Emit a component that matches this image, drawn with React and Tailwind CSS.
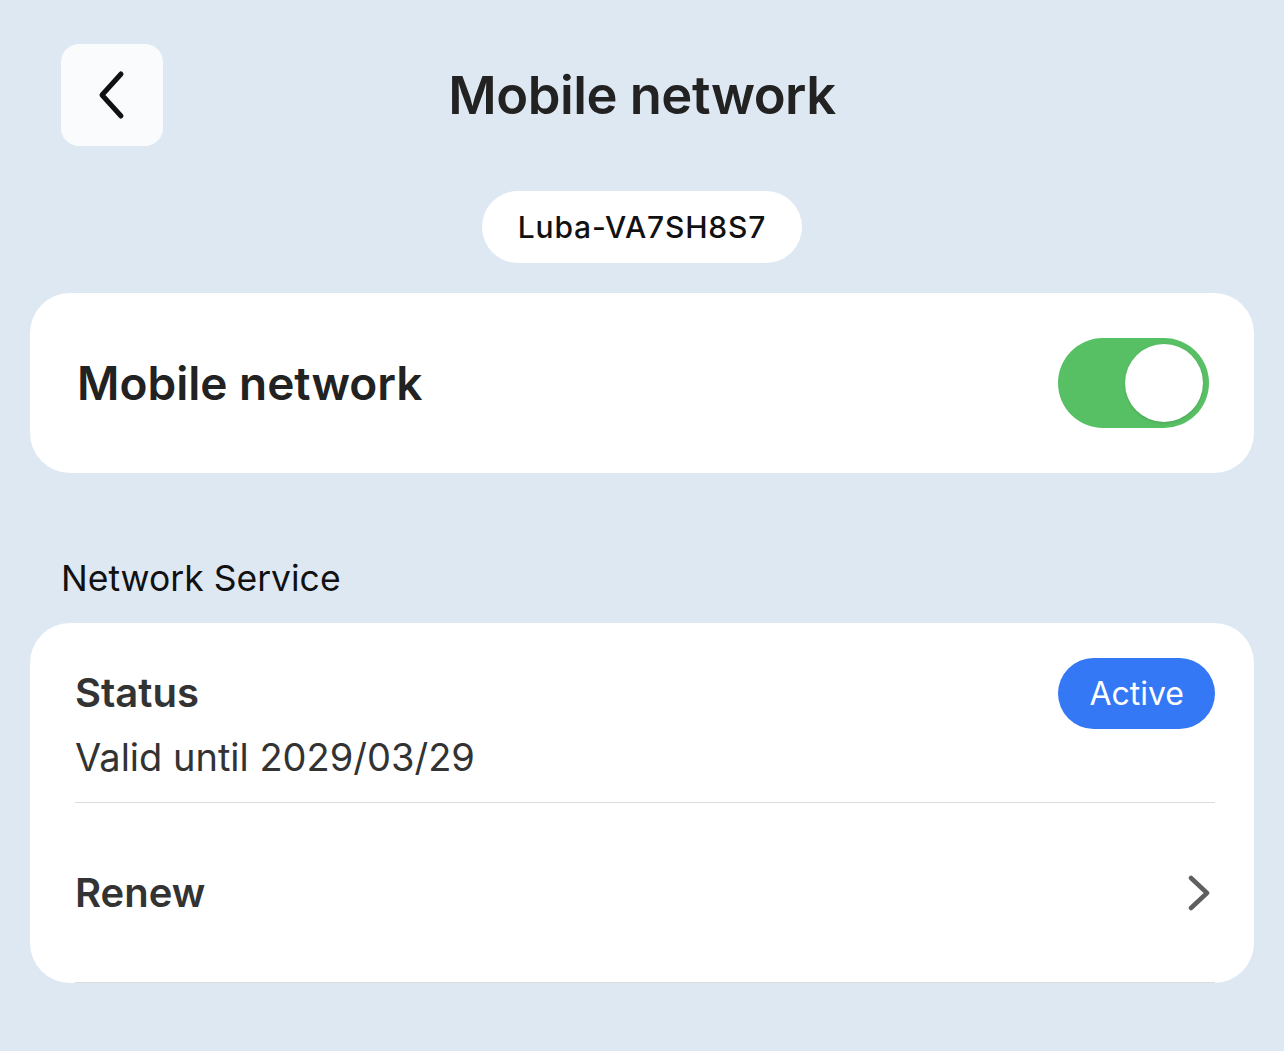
import React from 'react';

const font = { fontFamily: 'Inter, "Noto Sans", sans-serif' };

const Toggle = ({ on }) => (
  <div className={`w-[151px] h-[90px] rounded-full p-[6px] flex ${on ? 'bg-[#58c064] justify-end' : 'bg-[#d1d5db] justify-start'}`}>
    <div className="w-[78px] h-[78px] rounded-full bg-white shadow-[0_1px_3px_rgba(0,0,0,0.15)]" />
  </div>
);

const App = () => {
  return (
    <div className="min-h-screen w-full bg-[#dee8f3] text-[#222]" style={font}>
      {/* Header */}
      <div className="relative h-[191px] pt-[44px]">
        <button className="ml-[61px] w-[102px] h-[102px] rounded-[18px] bg-[#f9fbfd] flex items-center justify-center">
          <svg width="30" height="50" viewBox="0 0 30 50" fill="none">
            <path d="M24 4 L5 25 L24 46" stroke="#111" strokeWidth="5" strokeLinecap="round" strokeLinejoin="round" />
          </svg>
        </button>
        <h1 className="absolute left-0 right-0 top-[62px] text-center text-[52.5px] leading-[66px] font-semibold tracking-[-0.5px] text-[#222]">
          Mobile network
        </h1>
      </div>

      {/* Device pill */}
      <div className="flex justify-center">
        <div className="h-[72px] px-[36px] rounded-full bg-white flex items-center text-[30px] font-medium text-[#111] tracking-[0.8px]">
          Luba-VA7SH8S7
        </div>
      </div>

      <div className="px-[30px] pt-[30px]">
        {/* Mobile network toggle card */}
        <div className="h-[180px] rounded-[40px] bg-white flex items-center justify-between pl-[47px] pr-[45px]">
          <span className="text-[46px] font-semibold text-[#222]">Mobile network</span>
          <Toggle on />
        </div>

        {/* Network Service */}
        <div className="pt-[86px] pb-[24px] pl-[31px] text-[35.5px] leading-[40px] text-[#111]">Network Service</div>

        <div className="rounded-[40px] bg-white pl-[45px] pr-[39px] overflow-hidden">
          <div className="flex justify-between items-start pt-[35px] pb-[20px] border-b border-[#dcdcdc]">
            <div className="pt-[10px]">
              <div className="text-[40px] leading-[50px] font-semibold text-[#333]">Status</div>
              <div className="text-[38px] leading-[50px] mt-[14px] text-[#333]">Valid until 2029/03/29</div>
            </div>
            <div className="h-[71px] px-[31px] rounded-full bg-[#3478f6] text-white text-[32px] flex items-center">Active</div>
          </div>
          <div className="h-[180px] flex items-center justify-between border-b border-[#dcdcdc]">
            <span className="text-[40px] font-semibold text-[#333]">Renew</span>
            <svg width="24" height="36" viewBox="0 0 24 36" fill="none" className="mr-[4px]">
              <path d="M4 3 L20 18 L4 33" stroke="#5f5f5f" strokeWidth="4.5" strokeLinecap="round" strokeLinejoin="round" />
            </svg>
          </div>
        </div>
      </div>
    </div>
  );
};

export default App;
